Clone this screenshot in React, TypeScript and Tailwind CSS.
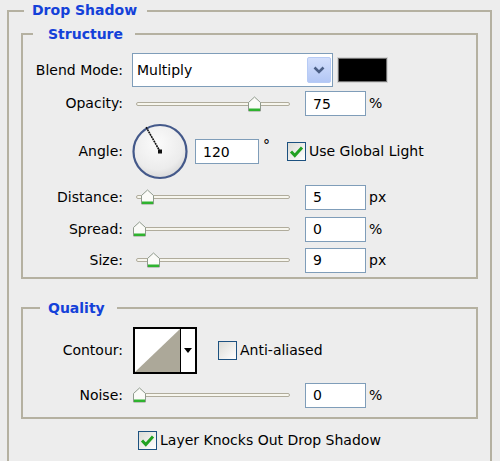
import React from "react";

// --- small XP-style controls ---
const Thumb = () => (
  <svg width="15" height="17" viewBox="0 0 15 17">
    <path d="M1.5 7 L7.5 1.5 L13.5 7 V15.5 H1.5 Z" fill="#fbfbf8" stroke="#8f9a8c" strokeWidth="1" />
    <rect x="2" y="13" width="11" height="2.5" fill="#2fb32f" />
  </svg>
);

const Slider = ({ at }: { at: number }) => (
  <div className="relative w-[160px] h-full shrink-0">
    <div className="absolute left-[4px] top-1/2 -translate-y-1/2 w-[154px] h-[4px] rounded-[2px] border border-[#b0ac9c] bg-[#f7f6ee]" />
    <div className="absolute top-1/2 -translate-y-1/2" style={{ left: at - 7 }}>
      <Thumb />
    </div>
  </div>
);

const Field = ({ value, w = "w-[61px]" }: { value: string; w?: string }) => (
  <div className={`${w} h-[25px] shrink-0 border border-[#7f9db9] bg-white pl-[7px] flex items-center leading-none`}>
    {value}
  </div>
);

const Check = ({ on }: { on: boolean }) => (
  <div className="w-[19px] h-[19px] shrink-0 border border-[#1c5180] bg-gradient-to-br from-[#dcdcd6] to-white flex items-center justify-center">
    {on && (
      <svg width="15" height="13" viewBox="0 0 15 13">
        <path d="M2 6.5 L5.8 10.5 L13 2.5" fill="none" stroke="#21a121" strokeWidth="3" />
      </svg>
    )}
  </div>
);

const Label = ({ children }: { children: React.ReactNode }) => (
  <div className="w-[100px] shrink-0 text-right">{children}</div>
);

const SliderRow = ({ label, value, unit, at, cls }: { label: string; value: string; unit: string; at: number; cls: string }) => (
  <div className={`flex items-center h-[24px] ${cls}`}>
    <Label>{label}</Label>
    <div className="ml-[9px] h-full">
      <Slider at={at} />
    </div>
    <div className="ml-[13px]">
      <Field value={value} />
    </div>
    <span className="ml-[3px]">{unit}</span>
  </div>
);

const Dial = () => (
  <svg width="56" height="57" viewBox="0 0 56 57">
    <defs>
      <radialGradient id="dialFill" cx="45%" cy="35%" r="70%">
        <stop offset="0%" stopColor="#fbfbfb" />
        <stop offset="70%" stopColor="#ececec" />
        <stop offset="100%" stopColor="#d4d4d4" />
      </radialGradient>
    </defs>
    <circle cx="28" cy="28.5" r="26.5" fill="url(#dialFill)" stroke="#44598a" strokeWidth="2.2" />
    <line x1="28" y1="28.5" x2="14" y2="4" stroke="#111" strokeWidth="1.6" strokeDasharray="2 0.6" />
    <rect x="26" y="26.5" width="4" height="4" fill="#111" />
  </svg>
);

export default function App() {
  return (
    <div className="w-[500px] h-[461px] overflow-hidden bg-[#ededed] pl-[7px] text-[14px] text-black font-['DejaVu_Sans',sans-serif]">
      {/* Drop Shadow group */}
      <fieldset className="w-[485px] border-2 border-[#b5b1a1] pb-[40px]">
        <legend className="ml-[15px] pl-[8px] pr-[10px] h-[21px] leading-[21px] font-bold text-[#1441d9]">Drop Shadow</legend>

        {/* Structure */}
        <fieldset className="ml-[12px] mt-[3px] w-[457px] border-2 border-[#b5b1a1] pb-[5px]">
          <legend className="ml-[10px] pl-[15px] pr-[12px] h-[20px] leading-[20px] font-bold text-[#1441d9]">Structure</legend>

          <div className="flex items-center h-[34px] mt-[9px]">
            <Label>Blend Mode:</Label>
            <div className="ml-[9px] w-[201px] h-full border border-[#7f9db9] bg-white flex items-center pl-[4px]">
              <span>Multiply</span>
              <div className="ml-auto mr-[1px] w-[24px] h-[26px] rounded-[2px] border border-[#b7cbf5] bg-gradient-to-b from-[#d3dffc] to-[#b3c7f5] flex items-center justify-center">
                <svg width="12" height="8" viewBox="0 0 12 8">
                  <path d="M1.5 1.5 L6 6 L10.5 1.5" fill="none" stroke="#4b5f86" strokeWidth="2.6" />
                </svg>
              </div>
            </div>
            <div className="ml-[5px] w-[49px] h-[24px] bg-black border border-[#6f6f6f] shadow-[0_0_0_1px_#d4d4d4]" />
          </div>

          <div className="flex items-center h-[25px] mt-[4px]">
            <Label>Opacity:</Label>
            <div className="ml-[9px] h-full">
              <Slider at={122} />
            </div>
            <div className="ml-[13px]">
              <Field value="75" />
            </div>
            <span className="ml-[3px]">%</span>
          </div>

          <div className="flex items-center h-[57px] mt-[7px]">
            <Label>Angle:</Label>
            <div className="ml-[9px] shrink-0">
              <Dial />
            </div>
            <div className="ml-[7px]">
              <Field value="120" w="w-[64px]" />
            </div>
            <span className="ml-[4px] self-start mt-[12px]">°</span>
            <div className="ml-[17px]">
              <Check on />
            </div>
            <span className="ml-[3px]">Use Global Light</span>
          </div>

          <SliderRow label="Distance:" value="5" unit="px" at={15} cls="mt-[5px]" />
          <SliderRow label="Spread:" value="0" unit="%" at={7} cls="mt-[8px]" />
          <SliderRow label="Size:" value="9" unit="px" at={21} cls="mt-[7px]" />
        </fieldset>

        {/* Quality */}
        <fieldset className="ml-[12px] mt-[19px] w-[457px] border-2 border-[#b5b1a1] pb-[10px]">
          <legend className="ml-[17px] pl-[8px] pr-[12px] h-[20px] leading-[20px] font-bold text-[#1441d9]">Quality</legend>

          <div className="flex items-center h-[47px] mt-[9px]">
            <Label>Contour:</Label>
            <div className="ml-[10px] w-[64px] h-full border-2 border-black flex">
              <svg width="45" height="43" viewBox="0 0 45 43" className="shrink-0">
                <rect width="45" height="43" fill="#ffffff" />
                <path d="M0 43 L45 0 V43 Z" fill="#aca899" />
              </svg>
              <div className="flex-1 border-l border-black bg-white flex items-center justify-center">
                <svg width="8" height="5" viewBox="0 0 8 5">
                  <path d="M0 0 H8 L4 5 Z" fill="#000" />
                </svg>
              </div>
            </div>
            <div className="ml-[21px]">
              <Check on={false} />
            </div>
            <span className="ml-[3px]">Anti-aliased</span>
          </div>

          <SliderRow label="Noise:" value="0" unit="%" at={7} cls="mt-[9px]" />
        </fieldset>

        <div className="flex items-center mt-[11px] ml-[129px]">
          <Check on />
          <span className="ml-[3px]">Layer Knocks Out Drop Shadow</span>
        </div>
      </fieldset>
    </div>
  );
}
